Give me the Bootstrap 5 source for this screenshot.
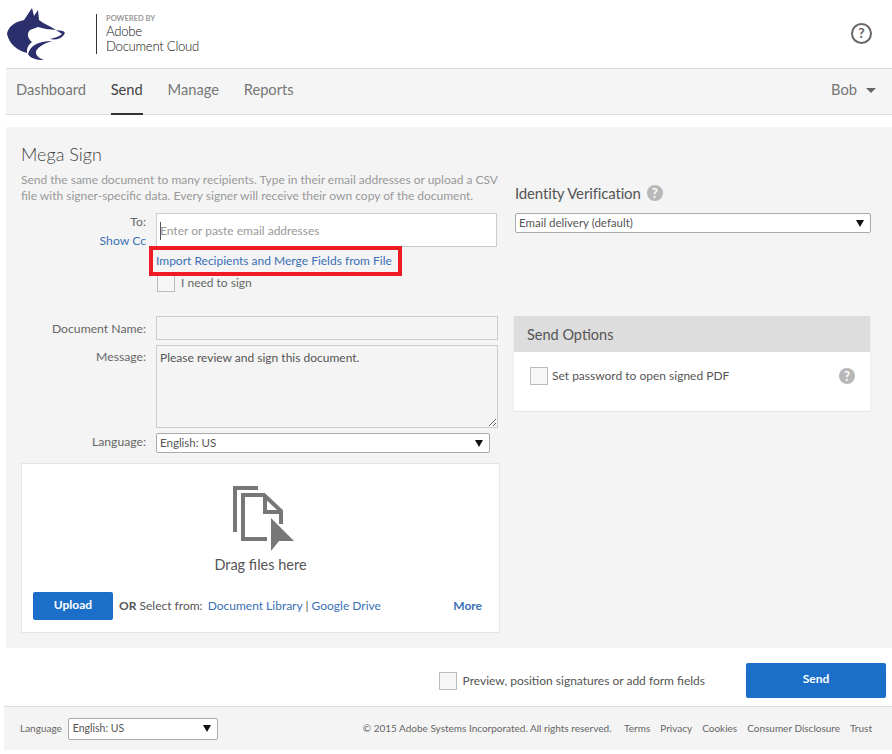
<!DOCTYPE html>
<html lang="en">
<head>
    <meta charset="UTF-8">
    <title>Mega Sign</title>
    <link rel="stylesheet" href="https://cdn.jsdelivr.net/npm/bootstrap@5.3.3/dist/css/bootstrap.min.css">
    <style>
        body { font-family: Lato, "Liberation Sans", sans-serif; font-size: 12px; color: #555; background: #fff; }
        a { text-decoration: none; color: #3a70b5; }
        .top-bar { height: 68px; padding-left: 6px; padding-right: 20px; }
        .powered { border-left: 1px solid #333; height: 40px; margin-left: 30px; padding-left: 9px; color: #111; font-size: 13.2px; line-height: 14.5px; letter-spacing: -.3px; font-weight: 300; }
        .powered small { display: block; font-size: 7.5px; line-height: 10px; font-weight: 700; color: #999; letter-spacing: 0; }
        .tabs-bar { margin-left: 6px; height: 47px; background: #f5f5f5; border-top: 1px solid #ddd; border-bottom: 1px solid #ddd; padding: 0 16px 0 10px; font-size: 14.7px; }
        .tabs-bar .nav { gap: 24.7px; height: 100%; }
        .tabs-bar .nav-link { padding: 0; color: #777; height: 46px; line-height: 40px; border-bottom: 2px solid transparent; }
        .tabs-bar .nav-link.active { color: #444; border-bottom-color: #333; }
        .user-name { color: #777; margin-bottom: 4px; }
        .user-caret { display: inline-block; border: 5px solid transparent; border-top-color: #666; border-bottom: 0; margin-left: 9px; vertical-align: 2px; }
        .main-panel { margin: 12px 0 0 6px; height: 521px; background: #f4f4f4; padding: 16px 21px 0 15px; }
        .left-col { width: 479px; }
        .right-col { width: 358px; margin-left: 13px; padding-top: 40px; }
        .page-title { font-size: 18px; font-weight: 300; line-height: 22px; margin: 0 0 7px; color: #444; }
        .intro { color: #999; font-size: 12px; line-height: 16px; margin: 0 0 9px; }
        .form-line { display: grid; grid-template-columns: 125px 342px; column-gap: 10px; }
        .to-line { height: 34px; }
        .middle-line { align-items: center; }
        .gap-doc { margin-top: 24px; }
        .gap-small { margin-top: 5px; }
        .line-label { text-align: right; font-size: 12.2px; color: #666; line-height: 19px; }
        .to-label { margin-top: -1px; }
        .msg-label { padding-top: 2px; }
        .lang-label { line-height: 16px; padding-bottom: 2px; }
        .check-label { text-align: left; font-size: 12px; padding-left: 1px; gap: 6px; }
        .text-box { border-radius: 0; border: 1px solid #ccc; padding: 0 3px; font-size: 12px; color: #555; background: transparent; box-shadow: none; font-weight: 400; }
        .text-box::placeholder { color: #999; }
        .to-box { width: 341px; height: 34px; background: linear-gradient(#555, #555) 3px 8px / 1px 18px no-repeat #fff; }
        .name-box { height: 24px; }
        .msg-box { height: 83px; min-height: 83px; padding-top: 3px; }
        .pick { appearance: none; height: 20px; border: 1px solid #aaa; border-radius: 2px; background-color: #fff; font-family: inherit; font-size: 11.5px; color: #555; padding: 0 20px 0 3px; background-image: url("data:image/svg+xml,%3Csvg xmlns='http://www.w3.org/2000/svg' width='8' height='7'%3E%3Cpath d='M0 0h8L4 7z' fill='%23111'/%3E%3C/svg%3E"); background-position: right 6px center; background-size: 8px 7px; box-shadow: none; }
        .lang-pick { width: 334px; }
        .ident-pick { width: 356px; }
        .import-line { position: relative; height: 26px; line-height: 27px; font-size: 12px; }
        .red-frame { position: absolute; left: -7px; top: -1px; width: 253px; height: 30px; border: 4px solid #ed1c24; pointer-events: none; }
        .square-check { width: 18px; height: 18px; margin: 0; border-radius: 0 !important; border: 1px solid #bbb; background-color: #f6f6f6; flex: none; }
        .drop-zone { height: 170px; margin-top: 10px; background: #fff; border: 1px solid #e6e6e6; padding: 22px 0 0 0; }
        .drop-art { margin-left: 6px; }
        .drop-label { font-size: 14.5px; color: #555; line-height: 20px; margin-top: 3px; }
        .drop-foot { margin-top: 17px; padding: 0 17px 0 11px; }
        .blue-btn { background: #1b6fc8; color: #fff; border: 0; border-radius: 2px; font-weight: 700; font-size: 12px; }
        .upload-btn { width: 80px; height: 28px; padding: 0 0 2px; }
        .from-line { font-size: 12px; margin-left: 6px; }
        .lib-link { margin-left: 2px; }
        .more-link { font-weight: 700; font-size: 12px; }
        .side-title { font-size: 15px; letter-spacing: -.15px; line-height: 20px; color: #555; padding-left: 2px; margin-bottom: 10px; gap: 6px; }
        .hint-dot { display: inline-flex; align-items: center; justify-content: center; width: 16px; height: 16px; border-radius: 50%; background: #b8b8b8; color: #fff; font-size: 13px; font-weight: 700; line-height: 1; }
        .options-card { margin-top: 83px; border-radius: 0; border: 0; border-bottom: 1px solid #e3e3e3; border-left: 1px solid #eee; border-right: 1px solid #eee; height: 96px; background: #fff; }
        .options-card .card-header { background: #ddd; border: 0; border-radius: 0; height: 36px; padding: 0 13px; line-height: 37px; font-size: 14.5px; color: #555; }
        .options-body { padding: 15px 15px 0 16px; font-size: 12px; }
        .action-row { height: 58px; padding: 15px 6px 0 0; }
        .preview-label { margin-top: 9px; gap: 6px; }
        .send-btn { width: 140px; height: 35px; margin-left: 41px; padding: 0 0 3px; }
        .bottom-bar { margin-left: 4px; height: 44px; background: #f4f4f4; border-top: 1px solid #ddd; padding: 0 20px 0 16px; font-size: 10px; color: #666; }
        .bottom-bar a { color: #666; margin-left: 10px; }
        .bottom-pick { width: 150px; height: 22px; margin-left: 6px; font-size: 10.5px; padding-left: 4px; }
        .help-ring { width: 21px; height: 21px; border: 2px solid #666; border-radius: 50%; color: #666; font-size: 14px; font-weight: 700; line-height: 1; margin-bottom: 2px; }
    </style>
</head>
<body>
    <div class="top-bar d-flex align-items-center justify-content-between">
        <div class="d-flex align-items-center">
            <svg width="60" height="56" viewBox="6 6 60 56">
                <path fill="#2b2f6b" d="M7 34C8 27 14 22 24 20L32 8L34 16L38 10L39 20C44 24 50 26 56 30L46 29L38 27L30 30C27 33 27 38 32 42C27 46 27 49 27 53C18 51 9 44 7 34Z"/>
                <path fill="#2b2f6b" d="M28 54C30 46 38 41 52 41C42 44 36 49 36 52C36 56 39 58 44 60C36 60 30 58 28 54Z"/>
                <path fill="#2b2f6b" d="M56 30L63 31L65 33L63 36C60 39 56 40 50 39C55 38 60 36 62 34Z"/>
            </svg>
            <div class="powered">
                <small>POWERED BY</small>
                Adobe<br>Document Cloud
            </div>
        </div>
        <div class="help-ring d-flex align-items-center justify-content-center">?</div>
    </div>

    <div class="tabs-bar d-flex align-items-center justify-content-between">
        <ul class="nav">
            <li class="nav-item"><a class="nav-link" href="#">Dashboard</a></li>
            <li class="nav-item"><a class="nav-link active" href="#">Send</a></li>
            <li class="nav-item"><a class="nav-link" href="#">Manage</a></li>
            <li class="nav-item"><a class="nav-link" href="#">Reports</a></li>
        </ul>
        <span class="user-name">Bob<span class="user-caret"></span></span>
    </div>

    <div class="main-panel d-flex">
        <div class="left-col">
            <h1 class="page-title">Mega Sign</h1>
            <p class="intro">Send the same document to many recipients. Type in their email addresses or upload a CSV file with signer-specific data. Every signer will receive their own copy of the document.</p>

            <div class="form-line to-line">
                <div class="line-label to-label">To:<br><a href="#">Show Cc</a></div>
                <input type="text" class="form-control text-box to-box" placeholder="Enter or paste email addresses">
            </div>
            <div class="form-line">
                <div></div>
                <div class="import-line">
                    <a href="#">Import Recipients and Merge Fields from File</a>
                    <span class="red-frame"></span>
                </div>
            </div>
            <div class="form-line">
                <div></div>
                <label class="d-flex align-items-center line-label check-label">
                    <input type="checkbox" class="form-check-input square-check">
                    <span>I need to sign</span>
                </label>
            </div>

            <div class="form-line gap-doc middle-line">
                <div class="line-label">Document Name:</div>
                <input type="text" class="form-control text-box name-box">
            </div>
            <div class="form-line gap-small">
                <div class="line-label msg-label">Message:</div>
                <textarea class="form-control text-box msg-box">Please review and sign this document.</textarea>
            </div>
            <div class="form-line gap-small middle-line">
                <div class="line-label lang-label">Language:</div>
                <select class="form-select pick lang-pick"><option>English: US</option></select>
            </div>

            <div class="drop-zone">
                <div class="text-center">
                    <svg class="drop-art" width="62" height="66" viewBox="0 0 62 66" fill="none">
                        <path stroke="#777" stroke-width="4" d="M2 46V2H25"/>
                        <path stroke="#777" stroke-width="4" d="M34 53H10V9H31L48 25V38"/>
                        <path stroke="#777" stroke-width="4" d="M32 9V26H48"/>
                        <path fill="#777" d="M38 32L61 55H46L38 65Z"/>
                    </svg>
                    <div class="drop-label">Drag files here</div>
                </div>
                <div class="d-flex align-items-center drop-foot">
                    <button class="btn blue-btn upload-btn" type="button">Upload</button>
                    <span class="from-line"><b>OR</b> Select from: <a href="#" class="lib-link">Document Library</a> | <a href="#">Google Drive</a></span>
                    <a href="#" class="more-link ms-auto">More</a>
                </div>
            </div>
        </div>

        <div class="right-col">
            <div class="side-title d-flex align-items-center">Identity Verification <span class="hint-dot">?</span></div>
            <select class="form-select pick ident-pick ms-auto d-block"><option>Email delivery (default)</option></select>
            <div class="card options-card">
                <div class="card-header">Send Options</div>
                <div class="options-body d-flex align-items-center">
                    <input type="checkbox" class="form-check-input square-check">
                    <span class="ms-1">Set password to open signed PDF</span>
                    <span class="hint-dot ms-auto">?</span>
                </div>
            </div>
        </div>
    </div>

    <div class="action-row d-flex align-items-start justify-content-end">
        <label class="d-flex align-items-center preview-label">
            <input type="checkbox" class="form-check-input square-check">
            <span>Preview, position signatures or add form fields</span>
        </label>
        <button class="btn blue-btn send-btn" type="button">Send</button>
    </div>

    <div class="bottom-bar d-flex align-items-center justify-content-between">
        <div class="d-flex align-items-center">
            <span>Language</span>
            <select class="form-select pick bottom-pick"><option>English: US</option></select>
        </div>
        <div>
            <span>© 2015 Adobe Systems Incorporated. All rights reserved.</span>
            <a href="#">Terms</a><a href="#">Privacy</a><a href="#">Cookies</a><a href="#">Consumer Disclosure</a><a href="#">Trust</a>
        </div>
    </div>

    <script src="https://cdn.jsdelivr.net/npm/bootstrap@5.3.3/dist/js/bootstrap.bundle.min.js"></script>
</body>
</html>
